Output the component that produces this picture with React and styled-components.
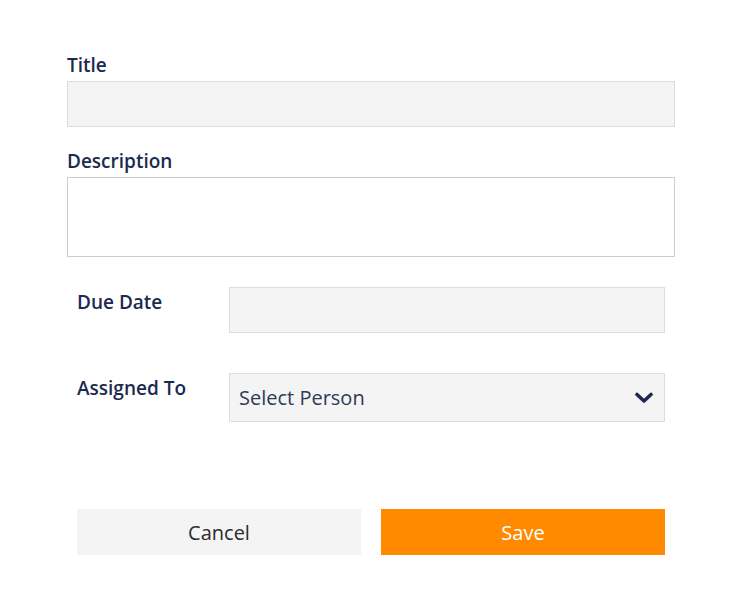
import React from 'react';
import styled, { createGlobalStyle } from 'styled-components';

const GlobalStyle = createGlobalStyle`
  html, body {
    margin: 0;
    padding: 0;
    background: #ffffff;
    font-family: "Open Sans", "Liberation Sans", sans-serif;
  }
`;

const NAVY = '#1c2a4f';

const Form = styled.form`
  display: flex;
  flex-direction: column;
  width: 608px;
  padding: 52px 0 0 67px;
`;

const Label = styled.label`
  display: block;
  font-size: 19px;
  line-height: 26px;
  font-weight: 600;
  color: ${NAVY};
  margin-bottom: 3px;
`;

const TextInput = styled.input`
  box-sizing: border-box;
  width: 100%;
  height: 46px;
  margin: 0 0 21px;
  padding: 0 10px;
  background: #f4f4f4;
  border: 1px solid #dddddd;
  border-radius: 0;
  font: inherit;
  outline: none;
`;

const TextArea = styled.textarea`
  box-sizing: border-box;
  display: block;
  width: 100%;
  height: 80px;
  margin: 0;
  padding: 8px 10px;
  background: #ffffff;
  border: 1px solid #cccccc;
  border-radius: 0;
  resize: none;
  font: inherit;
  outline: none;
`;

const Inset = styled.div`
  display: flex;
  flex-direction: column;
  padding: 0 10px;
`;

const Row = styled.div`
  display: flex;
  align-items: flex-start;
  margin-top: ${p => p.top}px;
`;

const RowLabel = styled(Label)`
  flex: 0 0 152px;
  margin: 2px 0 0;
`;

const RowInput = styled(TextInput)`
  flex: 1;
  margin: 0;
`;

const SelectBox = styled.div`
  flex: 1;
  box-sizing: border-box;
  height: 49px;
  display: flex;
  align-items: center;
  justify-content: space-between;
  padding: 0 11px 0 9px;
  background: #f4f4f4;
  border: 1px solid #dddddd;
  font-size: 20px;
  color: #2e3a57;
`;

const Buttons = styled.div`
  display: flex;
  gap: 20px;
  margin-top: 87px;
`;

const Button = styled.button`
  flex: 1;
  height: 46px;
  border: none;
  border-radius: 0;
  font-family: inherit;
  font-size: 20px;
  background: ${p => (p.$primary ? '#ff8a00' : '#f4f4f4')};
  color: ${p => (p.$primary ? '#ffffff' : '#2b2b2b')};
  cursor: pointer;
`;

const Chevron = () => (
  <svg width="18" height="12" viewBox="0 0 18 12">
    <polyline
      points="2,2.5 9,9 16,2.5"
      fill="none"
      stroke={NAVY}
      strokeWidth="3.6"
      strokeLinecap="round"
      strokeLinejoin="round"
    />
  </svg>
);

export default function App() {
  return (
    <>
      <GlobalStyle />
      <Form onSubmit={e => e.preventDefault()}>
        <Label>Title</Label>
        <TextInput type="text" />
        <Label>Description</Label>
        <TextArea />
        <Inset>
          <Row top={30}>
            <RowLabel>Due Date</RowLabel>
            <RowInput type="text" />
          </Row>
          <Row top={40}>
            <RowLabel>Assigned To</RowLabel>
            <SelectBox>
              <span>Select Person</span>
              <Chevron />
            </SelectBox>
          </Row>
          <Buttons>
            <Button type="button">Cancel</Button>
            <Button type="submit" $primary>
              Save
            </Button>
          </Buttons>
        </Inset>
      </Form>
    </>
  );
}
